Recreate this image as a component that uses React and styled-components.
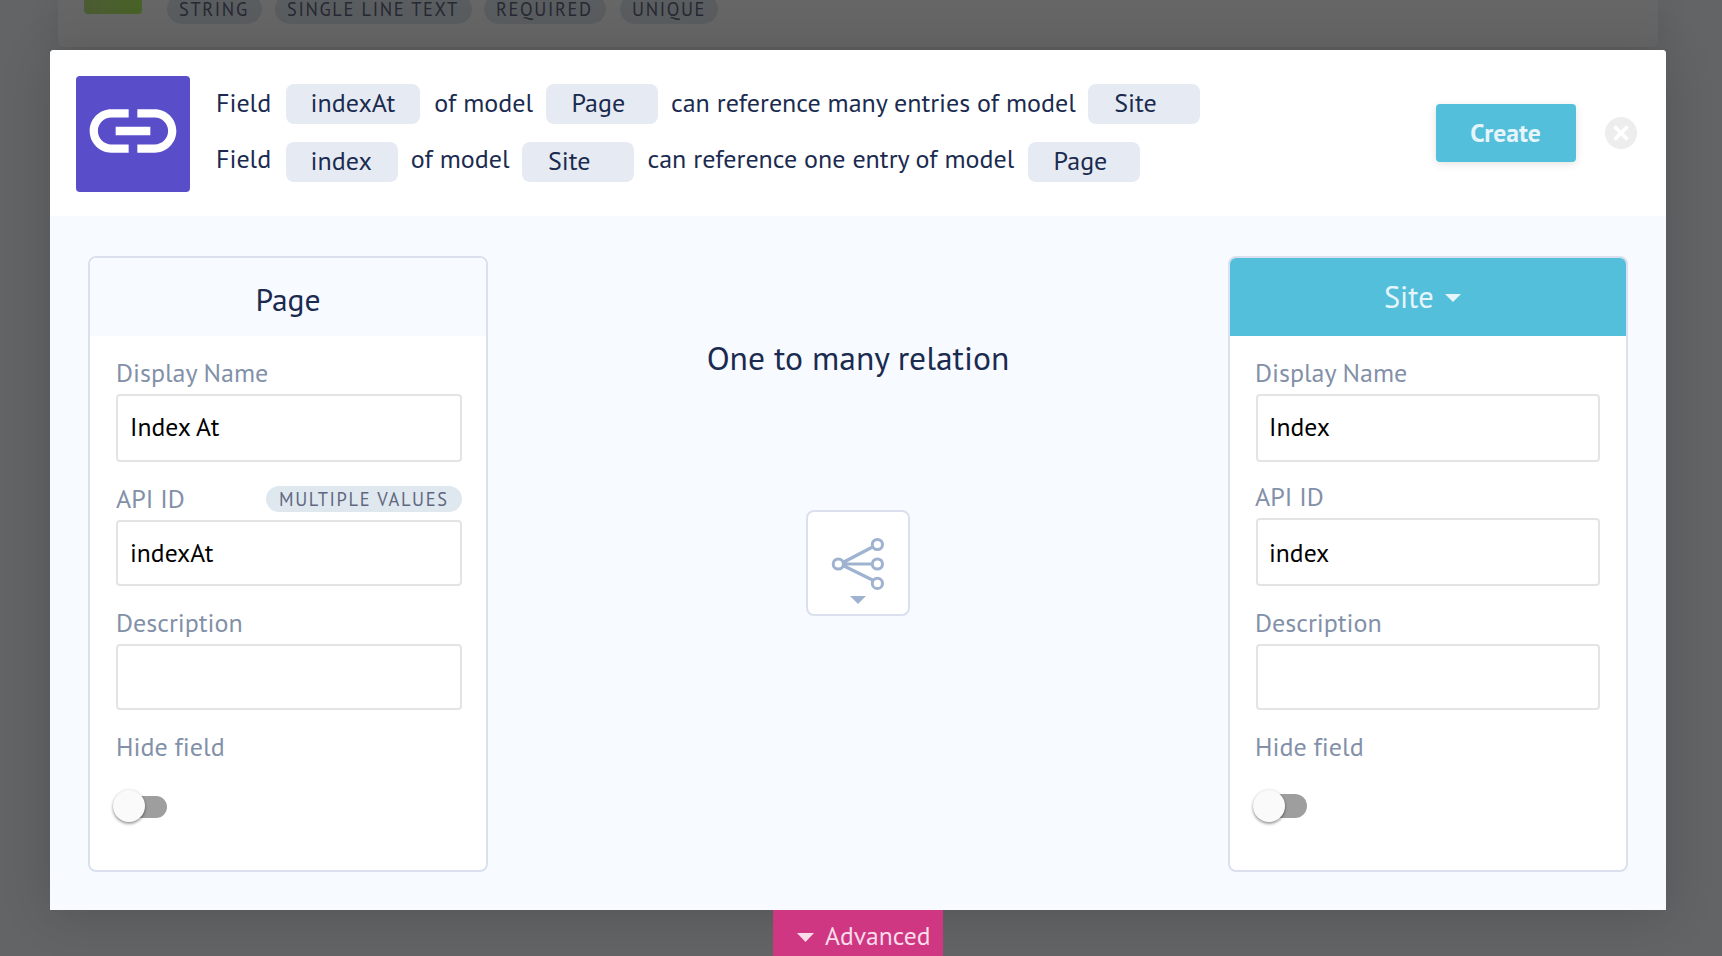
import React from "react";
import styled, { createGlobalStyle } from "styled-components";

const GlobalStyle = createGlobalStyle`
  * { box-sizing: border-box; }
  body {
    margin: 0;
    font-family: "PT Sans", "Noto Sans", sans-serif;
    font-variant-ligatures: none;
    -webkit-font-smoothing: antialiased;
  }
`;

const Page = styled.div`
  position: relative;
  height: 956px;
  overflow: hidden;
  background: #f7faff;
`;

const FieldCard = styled.div`
  display: flex;
  height: 47px;
  margin: 0 64px 0 58px;
  padding-left: 26px;
  border-radius: 0 0 6px 6px;
  background: #fff;
  box-shadow: 0 2px 40px rgba(0, 0, 0, 0.12);
`;

const FieldSwatch = styled.div`
  width: 58px;
  height: 14px;
  margin-right: 25px;
  border-radius: 0 0 4px 4px;
  background: linear-gradient(90deg, #bde580, #b4f562);
`;

const Tag = styled.span`
  width: ${(p) => p.$width}px;
  height: ${(p) => p.$height || 26}px;
  margin-right: ${(p) => p.$after || 0}px;
  margin-top: ${(p) => p.$top || 0}px;
  padding-left: ${(p) => p.$pad || 12}px;
  border-radius: 15px;
  background: #e0e8ef;
  color: #5f6780;
  font-size: 18.4px;
  line-height: ${(p) => p.$height || 26}px;
  letter-spacing: 1.65px;
  white-space: nowrap;
`;

const Overlay = styled.div`
  position: absolute;
  inset: 0;
  padding: 50px 56px 0 50px;
  background: rgba(0, 0, 0, 0.6);
`;

const Dialog = styled.div`
  height: 860px;
  border-radius: 4px 4px 0 0;
  background: #f7faff;
  box-shadow: 0 4px 50px rgba(0, 0, 0, 0.16);
`;

const DialogHeader = styled.header`
  display: flex;
  align-items: flex-start;
  height: 166px;
  padding: 26px 29px 0 26px;
  border-radius: 4px 4px 0 0;
  background: #fff;
`;

const LinkBadge = styled.div`
  display: flex;
  justify-content: center;
  width: 114px;
  height: 116px;
  padding-top: 3px;
  border-radius: 4px;
  background: #5a4dca;
`;

const Sentences = styled.div`
  flex: 1;
  padding: 8px 0 0 26px;
  color: #1a2b4f;
  font-size: 26px;
  line-height: 38px;
`;

const Sentence = styled.div`
  display: flex;
  align-items: flex-start;
  height: 40px;
  margin-bottom: 18px;
  white-space: nowrap;
`;

const Words = styled.span`
  margin: ${(p) => (p.$rise ? "-2px" : 0)} ${(p) => p.$right || 12.5}px 0 ${(p) => p.$left || 0}px;
`;

const NameChip = styled.span`
  width: ${(p) => p.$width || 112}px;
  height: 40px;
  padding-left: ${(p) => p.$pad || 26}px;
  border-radius: 8px;
  background: #e6ebf3;
`;

const CreateButton = styled.button`
  width: 140px;
  height: 58px;
  margin: 28px 29px 0 0;
  padding: 0 1px 0 0;
  border: 0;
  border-radius: 4px;
  background: #54bfdb;
  box-shadow: 0 2px 8px rgba(0, 0, 0, 0.12);
  color: #e6f5fa;
  font: bold 25.6px/58px "PT Sans", "Noto Sans", sans-serif;
`;

const CloseButton = styled.button`
  display: flex;
  width: 32px;
  height: 32px;
  margin-top: 41px;
  padding: 0;
  border: 0;
  background: none;
`;

const Body = styled.main`
  display: flex;
  justify-content: space-between;
  padding: 40px 38px 0;
`;

const Panel = styled.section`
  width: 400px;
  height: 616px;
  overflow: hidden;
  border: 2px solid #dae0ed;
  border-radius: 8px;
  background: #fff;
`;

const PanelTitle = styled.h2`
  display: flex;
  align-items: center;
  justify-content: center;
  gap: 11.5px;
  height: 78px;
  margin: 0;
  padding: ${(p) => (p.$active ? "0 11px 1px 0" : "4px 0 0")};
  background: ${(p) => (p.$active ? "#54bfdb" : "#f7faff")};
  color: ${(p) => (p.$active ? "#e6f5fa" : "#1a2b4f")};
  font-size: ${(p) => (p.$active ? 30.4 : 31.6)}px;
  font-weight: 400;
`;

const Form = styled.div`
  padding: ${(p) => p.$padding};
`;

const Label = styled.div`
  display: flex;
  justify-content: space-between;
  height: 36px;
  margin-top: ${(p) => p.$top}px;
  margin-left: ${(p) => p.$shift || 0}px;
  color: #8290a8;
  font-size: 26px;
  line-height: 37px;
  white-space: nowrap;
`;

const Input = styled.input`
  display: block;
  width: 100%;
  height: ${(p) => p.$height}px;
  margin-top: ${(p) => p.$top}px;
  padding: 0 12px ${(p) => p.$lift || 0}px ${(p) => p.$pad}px;
  border: 2px solid #e4e4e4;
  border-radius: 4px;
  outline: 0;
  background: #fff;
  color: #000;
  font: 25.6px "PT Sans", "Noto Sans", sans-serif;
`;

const Toggle = styled.div`
  display: flex;
  align-items: center;
  width: 55px;
  height: 32px;
  margin: 26px 0 0 -3.5px;
`;

const Knob = styled.span`
  z-index: 1;
  flex: none;
  width: 32px;
  height: 32px;
  border-radius: 50%;
  background: #fafafa;
  box-shadow: 0 2px 3px rgba(0, 0, 0, 0.35), 0 0 3px rgba(0, 0, 0, 0.14);
`;

const Track = styled.span`
  flex: none;
  width: 50px;
  height: ${(p) => p.$height}px;
  margin-left: -28px;
  margin-top: ${(p) => 24 - p.$height}px;
  border-radius: 12px;
  background: #9e9e9e;
`;

const Relation = styled.div`
  display: flex;
  flex-direction: column;
  align-items: center;
  padding-top: 78px;
`;

const RelationTitle = styled.h1`
  margin: 0;
  color: #1a2b4f;
  font-size: 33.6px;
  font-weight: 400;
  line-height: 48px;
`;

const RelationButton = styled.button`
  display: block;
  width: 104px;
  height: 106px;
  margin-top: 128px;
  padding: 0;
  border: 2px solid #dae0ed;
  border-radius: 8px;
  background: #fff;
`;

const Advanced = styled.button`
  display: flex;
  align-items: center;
  gap: 11px;
  width: 170px;
  height: 52px;
  margin: 0 0 0 723px;
  padding: 0 0 0 24px;
  border: 0;
  background: #cf3782;
  color: #fadcea;
  font: 25.6px/50px "PT Sans", "Noto Sans", sans-serif;
`;

const CaretSvg = styled.svg`
  flex: none;
  margin-top: ${(p) => p.$drop || 0}px;
`;

const Caret = ({ w, h, fill, drop }) => (
  <CaretSvg width={w} height={h} $drop={drop} viewBox="0 0 16 8" preserveAspectRatio="none">
    <path d="M0 0h16L8 8z" fill={fill} />
  </CaretSvg>
);

const LinkIcon = () => (
  <svg width="104" height="104" viewBox="0 0 24 24" fill="#fff">
    <path d="M3.9 12c0-1.71 1.39-3.1 3.1-3.1h4V7H7c-2.76 0-5 2.24-5 5s2.24 5 5 5h4v-1.9H7c-1.71 0-3.1-1.39-3.1-3.1zM8 13h8v-2H8v2zm9-6h-4v1.9h4c1.71 0 3.1 1.39 3.1 3.1s-1.39 3.1-3.1 3.1h-4V17h4c2.76 0 5-2.24 5-5s-2.24-5-5-5z" />
  </svg>
);

const CloseIcon = () => (
  <svg width="32" height="32" viewBox="0 0 32 32">
    <circle cx="16" cy="16" r="16" fill="#ededed" />
    <path d="M9.5 9.5l13 13M22.5 9.5l-13 13" stroke="#fff" strokeWidth="3.8" />
  </svg>
);

const RelationIcon = () => (
  <svg width="100" height="102" viewBox="0 0 100 102" fill="none" stroke="#9fb3d1">
    <path d="M34 51L65.5 34.5M34 52h31.5M34 53l31.5 15.5" strokeWidth="3.2" />
    <g strokeWidth="3" fill="#fff">
      <circle cx="30.3" cy="52" r="5.1" />
      <circle cx="69.4" cy="32.5" r="5.1" />
      <circle cx="69.4" cy="52" r="5.1" />
      <circle cx="69.4" cy="71.4" r="5.1" />
    </g>
    <path d="M42 84h16l-8 8z" fill="#9fb3d1" stroke="none" />
  </svg>
);

export default function App() {
  return (
    <Page>
      <GlobalStyle />
      <FieldCard>
        <FieldSwatch />
        <Tag $width={95} $after={13} $height={30} $top={-6}>STRING</Tag>
        <Tag $width={197} $after={12} $height={30} $top={-6}>SINGLE LINE TEXT</Tag>
        <Tag $width={122} $after={14} $height={30} $top={-6}>REQUIRED</Tag>
        <Tag $width={98} $height={30} $top={-6}>UNIQUE</Tag>
      </FieldCard>
      <Overlay>
        <Dialog>
          <DialogHeader>
            <LinkBadge><LinkIcon /></LinkBadge>
            <Sentences>
              <Sentence>
                <Words $right={14.8}>Field</Words>
                <NameChip $width={134} $pad={24.6}>indexAt</NameChip>
                <Words $left={14.3}>of model</Words>
                <NameChip>Page</NameChip>
                <Words $left={13.5}>can reference many entries of model</Words>
                <NameChip>Site</NameChip>
              </Sentence>
              <Sentence>
                <Words $rise $right={14.8}>Field</Words>
                <NameChip $pad={24.6}>index</NameChip>
                <Words $rise $left={12.8}>of model</Words>
                <NameChip>Site</NameChip>
                <Words $rise $left={13.5} $right={13.3}>can reference one entry of model</Words>
                <NameChip>Page</NameChip>
              </Sentence>
            </Sentences>
            <CreateButton>Create</CreateButton>
            <CloseButton aria-label="Close"><CloseIcon /></CloseButton>
          </DialogHeader>
          <Body>
            <Panel>
              <PanelTitle>Page</PanelTitle>
              <Form $padding="0 24px 0 26px">
                <Label $top={18}>Display Name</Label>
                <Input $top={4} $height={68} $pad={12} $lift={4} defaultValue="Index At" />
                <Label $top={18}>
                  API ID
                  <Tag $width={196} $top={6} $pad={13}>MULTIPLE VALUES</Tag>
                </Label>
                <Input $top={4} $height={66} $pad={12} $lift={2} defaultValue="indexAt" />
                <Label $top={18}>Description</Label>
                <Input $top={4} $height={66} $pad={12} />
                <Label $top={18}>Hide field</Label>
                <Toggle><Knob /><Track $height={22} /></Toggle>
              </Form>
            </Panel>
            <Relation>
              <RelationTitle>One to many relation</RelationTitle>
              <RelationButton aria-label="Relation type"><RelationIcon /></RelationButton>
            </Relation>
            <Panel>
              <PanelTitle $active>Site <Caret w={16} h={8} drop={2} fill="#e6f5fa" /></PanelTitle>
              <Form $padding="0 26px">
                <Label $top={18} $shift={-1}>Display Name</Label>
                <Input $top={4} $height={68} $pad={11} $lift={4} defaultValue="Index" />
                <Label $top={16} $shift={-1}>API ID</Label>
                <Input $top={4} $height={68} $pad={11} defaultValue="index" />
                <Label $top={18} $shift={-1}>Description</Label>
                <Input $top={4} $height={66} $pad={11} />
                <Label $top={18} $shift={-1}>Hide field</Label>
                <Toggle><Knob /><Track $height={24} /></Toggle>
              </Form>
            </Panel>
          </Body>
        </Dialog>
        <Advanced><Caret w={17} h={9} drop={2} fill="#fadcea" />Advanced</Advanced>
      </Overlay>
    </Page>
  );
}
